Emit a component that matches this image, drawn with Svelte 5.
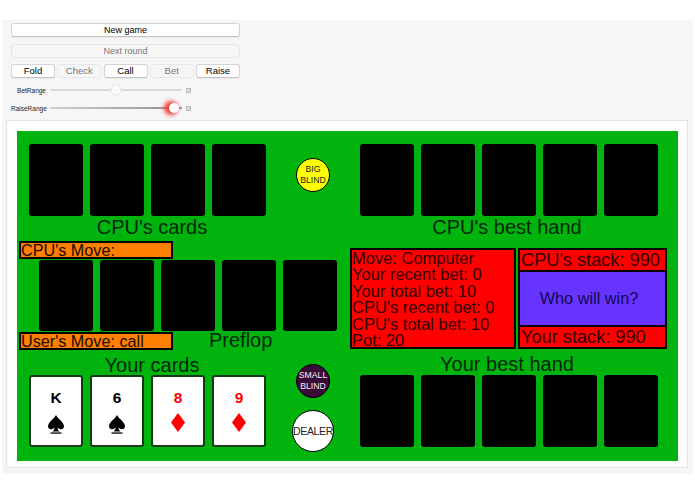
<script lang="ts">
	const cpuCards = [0, 1, 2, 3];
	const fiveCards = [0, 1, 2, 3, 4];
	const yourCards = [
		{ rank: 'K', suit: 'spade', red: false },
		{ rank: '6', suit: 'spade', red: false },
		{ rank: '8', suit: 'diamond', red: true },
		{ rank: '9', suit: 'diamond', red: true }
	];
	const actions = [
		{ label: 'Fold', on: true },
		{ label: 'Check', on: false },
		{ label: 'Call', on: true },
		{ label: 'Bet', on: false },
		{ label: 'Raise', on: true }
	];
	const info = [
		'Move: Computer',
		'Your recent bet: 0',
		'Your total bet: 10',
		"CPU's recent bet: 0",
		"CPU's total bet: 10",
		'Pot: 20'
	];
</script>

<div class="page">
	<div class="controls">
		<button class="btn wide">New game</button>
		<button class="btn wide off">Next round</button>
		<div class="actions">
			{#each actions as a}
				<button class="btn" class:off={!a.on}>{a.label}</button>
			{/each}
		</div>
		<div class="slider first">
			<span class="slider-label">BetRange</span>
			<div class="track"><span class="thumb" style="left: 50%"></span></div>
			<span class="tick"></span>
		</div>
		<div class="slider">
			<span class="slider-label">RaiseRange</span>
			<div class="track dark"><span class="thumb hot" style="left: 94%"></span></div>
			<span class="tick"></span>
		</div>
	</div>

	<div class="panel">
		<div class="table">
			<div class="left">
				<div class="hand-row">
					<div class="cards">
						{#each cpuCards as c (c)}<div class="card"></div>{/each}
					</div>
					<div class="chip big">BIG<br />BLIND</div>
				</div>
				<div class="title hand-title">CPU's cards</div>
				<div class="move cpu-move">CPU's Move:</div>
				<div class="cards community">
					{#each fiveCards as c (c)}<div class="card"></div>{/each}
				</div>
				<div class="move-row">
					<div class="move">User's Move: call</div>
					<div class="title street">Preflop</div>
				</div>
				<div class="title hand-title your">Your cards</div>
				<div class="hand-row">
					<div class="cards">
						{#each yourCards as c}
							<div class="card face" class:red={c.red}>
								<span class="rank">{c.rank}</span>
								{#if c.suit === 'spade'}
									<svg class="suit" width="16" height="19" viewBox="0 0 16 19">
										<path d="M8 0C6.5 3.5 0 7 0 11.2C0 14.5 4.2 15.2 6.6 12.6C6.5 14.4 5.8 15.7 4.4 16.6H11.6C10.2 15.7 9.5 14.4 9.4 12.6C11.8 15.2 16 14.5 16 11.2C16 7 9.5 3.5 8 0Z" fill="#000" />
										<rect x="2.5" y="17.4" width="11" height="1.3" fill="#000" />
									</svg>
								{:else}
									<svg class="suit diamond" width="14" height="19" viewBox="0 0 14 19">
										<path d="M7 0L14 9.5L7 19L0 9.5Z" fill="#f00" />
									</svg>
								{/if}
							</div>
						{/each}
					</div>
					<div class="chips">
						<div class="chip small">SMALL<br />BLIND</div>
						<div class="chip dealer">DEALER</div>
					</div>
				</div>
			</div>

			<div class="right">
				<div class="cards">
					{#each fiveCards as c (c)}<div class="card"></div>{/each}
				</div>
				<div class="title best-title">CPU's best hand</div>
				<div class="status">
					<div class="info">
						{#each info as line}<div>{line}</div>{/each}
					</div>
					<div class="stacks">
						<div class="stack">CPU's stack: 990</div>
						<div class="winner">Who will win?</div>
						<div class="stack">Your stack: 990</div>
					</div>
				</div>
				<div class="title best-title lower">Your best hand</div>
				<div class="cards">
					{#each fiveCards as c (c)}<div class="card"></div>{/each}
				</div>
			</div>
		</div>
	</div>
</div>

<style>
	:global(body) {
		margin: 0;
		background: #fff;
		font-family: 'Liberation Sans', Arial, sans-serif;
	}

	.page {
		width: 691px;
		height: 454px;
		margin: 20px 0 0 2px;
		background: #f6f6f6;
		box-sizing: border-box;
		padding: 3px 4px 0;
	}

	.controls {
		width: 229px;
		margin-left: 5px;
		display: flex;
		flex-direction: column;
	}

	.btn {
		height: 14px;
		padding: 0;
		border: 1px solid #d4d4d4;
		border-bottom-color: #c4c4c4;
		border-radius: 3px;
		background: #fff;
		font-family: inherit;
		font-size: 9px;
		line-height: 12px;
		color: #000;
		box-shadow: 0 1px 1px rgba(0, 0, 0, 0.06);
	}

	.actions .btn {
		font-size: 9.5px;
	}

	.btn.off {
		background: #f6f6f6;
		border-color: #e8e8e8;
		color: #777;
		box-shadow: none;
	}

	.wide {
		width: 100%;
		margin-bottom: 7px;
	}

	.actions {
		display: grid;
		grid-template-columns: repeat(5, 44px);
		justify-content: space-between;
		margin-top: -1px;
	}

	.slider {
		display: flex;
		align-items: center;
		height: 12px;
		margin-top: 6px;
		width: 186px;
		position: relative;
	}

	.slider-label {
		width: 35px;
		margin-right: 4px;
		text-align: right;
		font-size: 6.5px;
		color: #222;
		white-space: nowrap;
	}

	.track {
		position: relative;
		width: 132px;
		height: 2px;
		border-radius: 1px;
		background: #d9d9d9;
	}

	.track.dark {
		background: linear-gradient(to right, #d0d0d0, #8f8f8f);
	}

	.thumb {
		position: absolute;
		top: -4px;
		width: 10px;
		height: 10px;
		margin-left: -5px;
		border-radius: 50%;
		background: #fafafa;
		box-shadow: 0 0 1px rgba(0, 0, 0, 0.35);
	}

	.thumb.hot {
		background: #fff;
		box-shadow: -3px 0 4px 2px #ef3b3b;
	}

	.tick {
		width: 3px;
		height: 3px;
		margin-left: 4px;
		background: #dcdcdc;
		border: 1px solid #bdbdbd;
	}

	.panel {
		margin-top: 6px;
		width: 682px;
		height: 348px;
		box-sizing: border-box;
		padding: 10px 9px 6px 10px;
		background: #fff;
		border: 1px solid #e2e2e2;
	}

	.table {
		display: flex;
		width: 661px;
		height: 330px;
		background: #00b40d;
		color: #000;
	}

	.left,
	.right {
		padding-top: 13px;
		box-sizing: border-box;
	}

	.left {
		width: 333px;
	}

	.right {
		width: 328px;
	}

	.hand-row {
		display: flex;
		padding-left: 12px;
	}

	.cards {
		display: flex;
		gap: 7px;
	}

	.card {
		width: 54px;
		height: 72px;
		box-sizing: border-box;
		border-radius: 3px;
		background: #000;
	}

	.card.face {
		display: flex;
		flex-direction: column;
		align-items: center;
		border: 2px solid #143a18;
		background: #fff;
		color: #000;
	}

	.card.red {
		color: #f00;
	}

	.rank {
		margin-top: 12px;
		font-size: 15.5px;
		line-height: 18px;
		font-weight: bold;
	}

	.suit {
		margin-top: 8px;
	}

	.suit.diamond {
		margin-top: 6px;
	}

	.title {
		font-size: 20px;
		line-height: 23px;
		color: #012805;
	}

	.hand-title {
		width: 270px;
		text-align: center;
	}

	.your {
		margin-top: 5px;
		line-height: 20px;
	}

	.best-title {
		text-align: center;
		width: 314px;
	}

	.lower {
		margin-top: 4px;
		line-height: 22px;
	}

	.move {
		width: 154px;
		height: 18px;
		margin-left: 2px;
		box-sizing: border-box;
		border: 2px solid #000;
		background: #ff7f00;
		font-size: 16.2px;
		line-height: 15px;
		color: #1a0a00;
		white-space: nowrap;
	}

	.cpu-move {
		margin-top: 2px;
	}

	.community {
		margin: 1px 0 1px 22px;
		height: 71px;
	}

	.community .card {
		height: 71px;
	}

	.move-row {
		display: flex;
	}

	.street {
		margin-left: 36px;
		line-height: 20px;
		margin-top: -2px;
	}

	.chip {
		display: flex;
		align-items: center;
		justify-content: center;
		box-sizing: border-box;
		border-radius: 50%;
		border: 1px solid #000;
		text-align: center;
		font-size: 8.7px;
		line-height: 11px;
	}

	.big {
		width: 34px;
		height: 34px;
		margin: 14px 0 0 30px;
		background: #ff0;
		color: #222;
	}

	.chips {
		display: flex;
		flex-direction: column;
		align-items: center;
		width: 42px;
		margin: -11px 0 0 26px;
	}

	.small {
		width: 34px;
		height: 34px;
		background: #3a0a3a;
		color: #f2f2f2;
	}

	.dealer {
		width: 42px;
		height: 42px;
		margin-top: 12px;
		background: #fff;
		font-size: 10.5px;
		color: #222;
		letter-spacing: -0.3px;
	}

	.right .cards {
		padding-left: 10px;
	}

	.status {
		display: flex;
		gap: 2px;
		margin-top: 9px;
		height: 101px;
		width: 317px;
	}

	.info {
		width: 166px;
		box-sizing: border-box;
		border: 2px solid #000;
		background: #f00;
		padding: 0;
		font-size: 16.5px;
		line-height: 16.4px;
		color: #300;
		white-space: nowrap;
		overflow: hidden;
	}

	.stacks {
		width: 149px;
		display: flex;
		flex-direction: column;
	}

	.stack {
		height: 24px;
		box-sizing: border-box;
		border: 2px solid #000;
		background: #f00;
		padding-left: 1px;
		font-size: 18.2px;
		line-height: 21px;
		color: #300;
		white-space: nowrap;
	}

	.winner {
		flex: 1;
		display: flex;
		align-items: center;
		justify-content: center;
		padding-right: 7px;
		border-left: 2px solid #000;
		border-right: 2px solid #000;
		background: #63f;
		font-size: 16.3px;
		color: #100a50;
	}
</style>
